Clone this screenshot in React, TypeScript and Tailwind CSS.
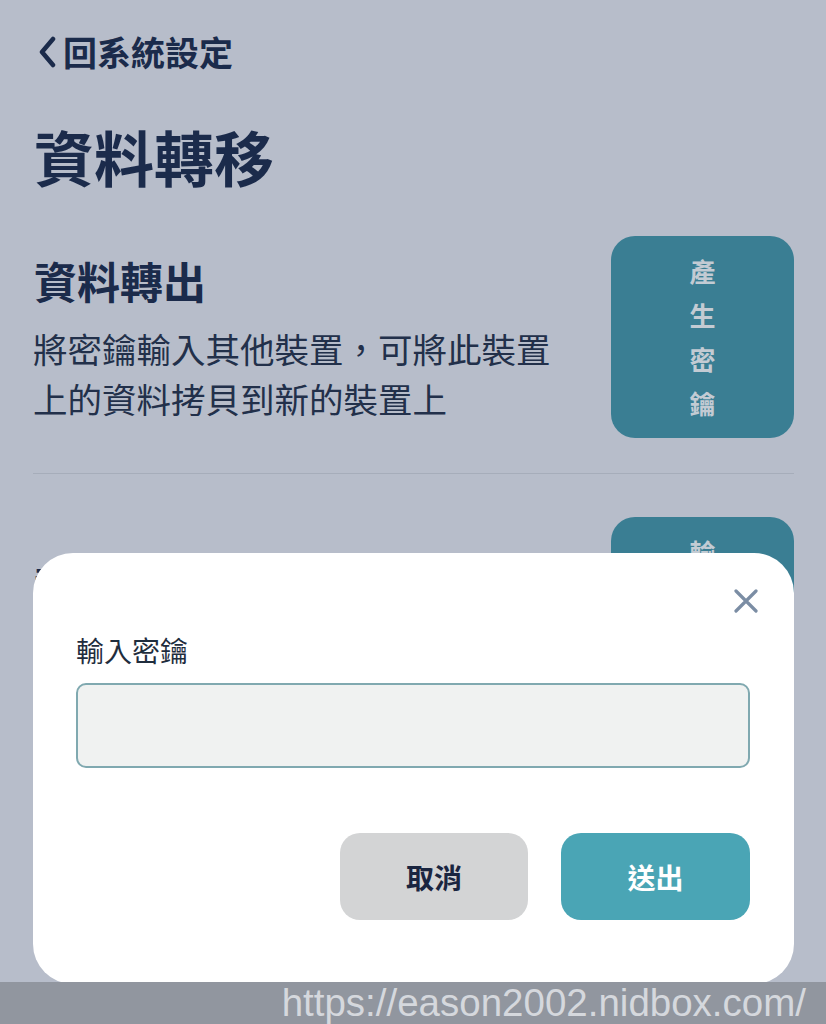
import React from 'react';

const font = { fontFamily: '"Noto Sans CJK TC", "Noto Sans", sans-serif' };

const VerticalButton: React.FC<{ label: string }> = ({ label }) => (
  <button className="w-[183px] h-[202px] shrink-0 rounded-[24px] bg-[#3a7e93] flex flex-col items-center justify-center">
    {label.split('').map((ch, i) => (
      <span key={i} className="text-[26px] leading-[44px] font-bold text-[#c3cbd3]">
        {ch}
      </span>
    ))}
  </button>
);

const App: React.FC = () => {
  return (
    <div className="relative w-[826px] h-[1024px] overflow-hidden bg-[#b7bdca] text-[#1b2b4b]" style={font}>
      {/* Page */}
      <div className="pl-[33px] pr-[32px]">
        <div className="flex items-center h-[36px] mt-[34px] ml-[4px]">
          <svg width="20" height="32" viewBox="0 0 20 32" fill="none">
            <path d="M16 3 L5 16 L16 29" stroke="#1b2b4b" strokeWidth="4.5" strokeLinecap="round" strokeLinejoin="round" />
          </svg>
          <span className="ml-[6px] text-[34px] leading-[36px] font-bold">回系統設定</span>
        </div>

        <h1 className="mt-[56px] text-[60px] leading-[60px] font-bold ml-[1px]">資料轉移</h1>

        {/* Export section */}
        <div className="mt-[50px] flex justify-between">
          <div className="pt-[22px]">
            <h2 className="text-[43px] leading-[44px] font-bold ml-[1px]">資料轉出</h2>
            <p className="mt-[21px] text-[34.5px] leading-[50px] text-[#22304a]">
              將密鑰輸入其他裝置，可將此裝置
              <br />
              上的資料拷貝到新的裝置上
            </p>
          </div>
          <VerticalButton label="產生密鑰" />
        </div>

        <div className="mt-[35px] h-[1px] bg-[#a6adba]" />

        {/* Import section */}
        <div className="mt-[43px] flex justify-between">
          <div className="pt-[46px]">
            <h2 className="text-[43px] leading-[44px] font-bold ml-[1px]">資料轉入</h2>
          </div>
          <VerticalButton label="輸入密鑰" />
        </div>
      </div>

      {/* Modal */}
      <div className="absolute left-[33px] top-[553px] w-[761px] h-[431px] rounded-[40px] bg-white pl-[43px] pr-[44px]">
        <button className="absolute right-[36px] top-[36px] w-[24px] h-[24px]">
          <svg width="24" height="24" viewBox="0 0 24 24" fill="none">
            <path d="M2 2 L22 22 M22 2 L2 22" stroke="#7b8da4" strokeWidth="3.2" strokeLinecap="round" />
          </svg>
        </button>
        <div className="pt-[81px] text-[28px] leading-[32px] text-[#1f2d3d]">輸入密鑰</div>
        <input
          type="text"
          className="mt-[17px] w-full h-[85px] rounded-[10px] bg-[#f0f2f1] border-2 border-[#80a9b0] outline-none px-4 text-[28px]"
        />
        <div className="mt-[65px] flex justify-end gap-[33px]">
          <button className="w-[188px] h-[87px] rounded-[20px] bg-[#d3d4d5] text-[28px] font-bold text-[#1a2540]">
            取消
          </button>
          <button className="w-[189px] h-[87px] rounded-[20px] bg-[#4aa5b5] text-[28px] font-bold text-white">
            送出
          </button>
        </div>
      </div>

      {/* Bottom band */}
      <div className="absolute left-0 bottom-0 w-full h-[42px] bg-[#91969f] flex items-center justify-end pr-[20px]">
        <span
          className="text-[38.5px] leading-[40px] text-[#d5d8dd]"
          style={{ fontFamily: '"Liberation Sans", Arial, sans-serif' }}
        >
          https://eason2002.nidbox.com/
        </span>
      </div>
    </div>
  );
};

export default App;
